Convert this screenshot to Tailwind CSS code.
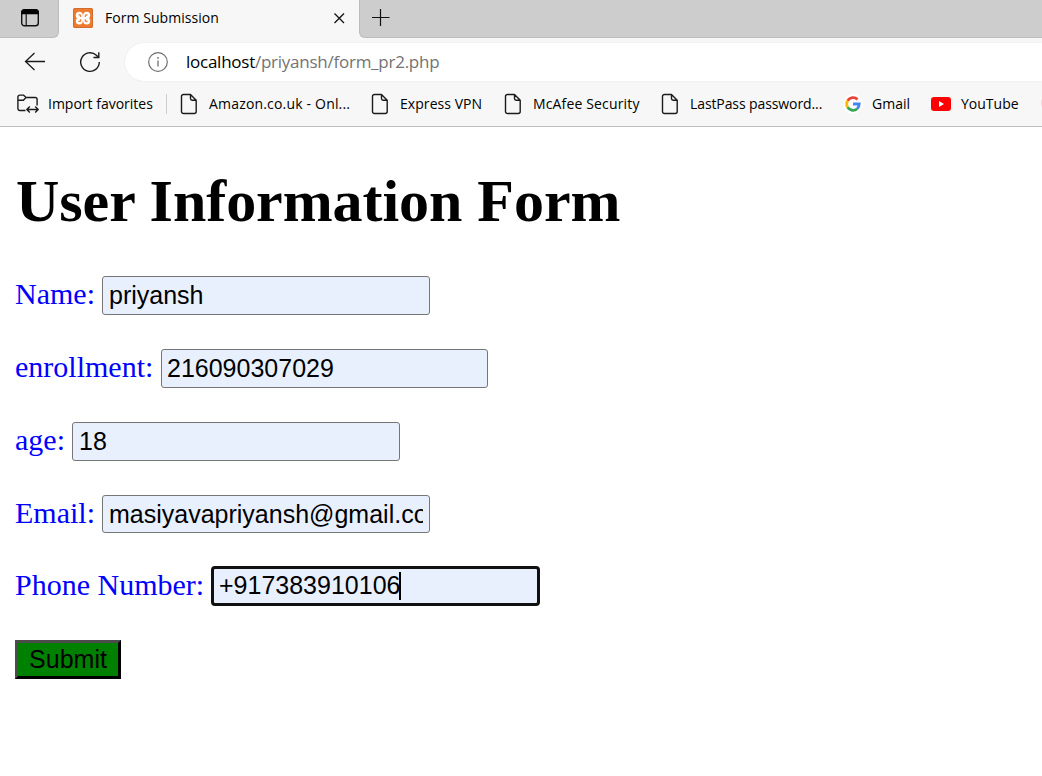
<!DOCTYPE html>
<html lang="en">
<head>
<meta charset="utf-8">
<title>Form Submission</title>
<script src="https://cdn.jsdelivr.net/npm/@tailwindcss/browser@4"></script>
</head>
<body class="w-[1042px] h-[776px] overflow-hidden bg-white text-black font-['Open_Sans','Noto_Sans',sans-serif]">
<svg class="hidden">
  <symbol id="page" viewBox="0 0 18 22"><path d="M3.500 1.500H10.500L16.200 7.200V18.500a2 2 0 0 1-2 2H3.500a2 2 0 0 1-2-2v-15a2 2 0 0 1 2-2ZM10.500 1.500V5.500a1.700 1.700 0 0 0 1.700 1.700h4" fill="none" stroke="#1b1b1b" stroke-width="1.400" stroke-linejoin="round"/></symbol>
</svg>
<header class="bg-[#f7f7f7] h-[127px] border-b border-[#bdbdbd]">
  <div class="flex h-[38px] bg-[#f7f7f7]">
    <div class="w-[59px] h-[38px] bg-[#cdcdcd] rounded-br-md border-b border-r border-[#bcbcbc] pl-5 pt-[8px]">
      <svg class="w-5 h-5" viewBox="0 0 20 20"><rect x="1.700" y="1.700" width="16.600" height="16.100" rx="2.800" fill="none" stroke="#111" stroke-width="1.400"/><path d="M1.200 6.200V4.400A3.200 3.200 0 0 1 4.400 1.200h11.200a3.200 3.200 0 0 1 3.200 3.200v1.800Z" fill="#000"/><path d="M6.200 6v12" stroke="#111" stroke-width="1.200"/></svg>
    </div>
    <div class="w-[300px] flex items-center pl-[14px] pb-[2px]">
      <svg class="w-5 h-5 shrink-0" viewBox="0 0 20 20"><rect width="20" height="20" rx="1.800" fill="#f07a2c"/><rect x=".5" y=".5" width="19" height="19" rx="1.500" fill="none" stroke="#cf6d35"/><g fill="#fff"><circle cx="6.300" cy="7.300" r="3.500"/><circle cx="13.700" cy="7.300" r="3.500"/><circle cx="6.300" cy="13" r="3.500"/><circle cx="13.700" cy="13" r="3.500"/><rect x="5.500" y="7.500" width="9" height="5.300"/></g><path d="M5.500 6.900h1.300q.9 0 .9.900v1.200M14.500 6.900h-1.300q-.9 0-.9.900v1.200M5.500 13.400h1.300q.9 0 .9-.9v-1.200M14.500 13.400h-1.300q-.9 0-.9-.9v-1.200" fill="none" stroke="#f07a2c" stroke-width="1.200"/></svg>
      <span class="ml-3 text-[14px] tracking-[0.050px] whitespace-nowrap w-[228px] relative -top-px">Form Submission</span>
      <svg class="w-3 h-3 shrink-0" viewBox="0 0 12 12"><path d="M1.500 1.500 11 11M11 1.500 1.500 11" stroke="#111" stroke-width="1.300"/></svg>
    </div>
    <div class="flex-1 bg-[#cdcdcd] rounded-bl-md border-b border-l border-[#bcbcbc] pl-[12px] pt-[8px]">
      <svg class="w-[18px] h-[18px]" viewBox="0 0 18 18"><path d="M0 9.500h17.500M8.500 1v17" stroke="#111" stroke-width="1.200"/></svg>
    </div>
  </div>
  <div class="flex items-center h-12">
    <svg class="ml-6 w-[22px] h-5 shrink-0" viewBox="0 0 22 20"><path d="M21 9.500H2M10.500 1 1.500 9.500l9 8.500" fill="none" stroke="#1b1b1b" stroke-width="1.300"/></svg>
    <svg class="ml-[33px] w-[22px] h-[22px] shrink-0" viewBox="0 0 22 22"><path d="M20.300 11a9.300 9.300 0 1 1-2.900-6.700l1.800 1.800M19.800 1.200v5.300h-5.300" fill="none" stroke="#1b1b1b" stroke-width="1.400"/></svg>
    <div class="ml-6 h-[38px] flex-1 flex items-center bg-white rounded-l-full shadow-[0_0_2px_#e2e2e2] pl-[23px]">
      <svg class="w-5 h-5 shrink-0" viewBox="0 0 20 20"><circle cx="10" cy="10" r="9.300" fill="none" stroke="#707070" stroke-width="1.200"/><path d="M10 8.500v6" stroke="#707070" stroke-width="1.300"/><circle cx="10" cy="5.900" r=".9" fill="#707070"/></svg>
      <span class="ml-[18px] text-[17px] tracking-[-0.250px] whitespace-nowrap">localhost<span class="text-[#737373]">/priyansh/form_pr2.php</span></span>
    </div>
  </div>
  <nav class="flex items-center h-[34px] text-[14px] whitespace-nowrap overflow-hidden">
    <div class="w-[167px] flex items-center shrink-0 pl-[17px] relative">
      <svg class="w-[22px] h-5 shrink-0 relative top-px" viewBox="0 0 22 20"><path d="M8.500 16.500H2.800A1.900 1.900 0 0 1 .9 14.600V3A1.900 1.900 0 0 1 2.800 1.100h3.600L9 3.500h9.200a1.900 1.900 0 0 1 1.900 1.900v6M.9 6.200h5.500L9 3.500M10.300 15.500h10.400M12.800 12.500l-3 3 3 3M18.200 12.500l3 3-3 3" fill="none" stroke="#1b1b1b" stroke-width="1.400" stroke-linejoin="round"/></svg>
      <span class="ml-[9px]">Import favorites</span>
      <i class="absolute right-0 top-px h-5 w-px bg-[#cfcfcf]"></i>
    </div>
    <div class="w-[191px] flex items-center shrink-0 pl-[13px]"><svg class="w-[18px] h-[22px] relative top-px"><use href="#page"/></svg><span class="ml-[11px] tracking-[0.180px]">Amazon.co.uk - Onl...</span></div>
    <div class="w-[133px] flex items-center shrink-0 pl-[13px]"><svg class="w-[18px] h-[22px] relative top-px"><use href="#page"/></svg><span class="ml-[11px] tracking-[0.060px]">Express VPN</span></div>
    <div class="w-[157px] flex items-center shrink-0 pl-[13px]"><svg class="w-[18px] h-[22px] relative top-px"><use href="#page"/></svg><span class="ml-[11px] tracking-[0.150px]">McAfee Security</span></div>
    <div class="w-[184px] flex items-center shrink-0 pl-[13px]"><svg class="w-[18px] h-[22px] relative top-px"><use href="#page"/></svg><span class="ml-[11px] tracking-[-0.100px]">LastPass password...</span></div>
    <div class="w-[99px] flex items-center shrink-0 pl-[11px]">
      <svg class="w-5 h-5 shrink-0 relative top-px" viewBox="0 0 20 20"><circle cx="10" cy="10" r="10" fill="#fff"/><g fill="none" stroke-width="2.800"><path d="M4.600 6.700A6.300 6.300 0 0 1 14.500 5.500" stroke="#ea4335"/><path d="M4.600 13.300a6.300 6.300 0 0 1 0-6.600" stroke="#fbbc05"/><path d="M14.200 14.700a6.300 6.300 0 0 1-9.600-1.400" stroke="#34a853"/><path d="M10 10h6.200a6.300 6.300 0 0 1-2 4.700" stroke="#4285f4"/></g></svg>
      <span class="ml-[9px]">Gmail</span></div>
    <div class="flex items-center shrink-0">
      <svg class="w-5 h-[14px] shrink-0 relative top-px" viewBox="0 0 20 14"><rect width="20" height="14" rx="3" fill="#f00"/><path d="M8 4v6l5-3Z" fill="#fff"/></svg>
      <span class="ml-[10px] w-[80px]">YouTube</span></div>
    <i class="w-5 h-5 rounded-full bg-[#f3d9de] shrink-0"></i>
  </nav>
</header>
<main class="pl-[15px] pt-[36px] font-['Liberation_Serif',serif] text-[30px] leading-[36px] text-[#00f]">
  <h1 class="pl-px text-[60px] leading-[76px] tracking-[-0.050px] font-bold text-black whitespace-nowrap">User Information Form</h1>
  <form class="mt-[37px] flex flex-col">
    <label class="flex h-[73px] items-start"><span class="w-[87px]">Name:</span><input class="w-[328px] h-[39px] rounded-[3px] border border-[#767676] bg-[#e8f0fe] px-[6px] font-['Liberation_Sans',sans-serif] text-[25px] text-black" value="priyansh"></label>
    <label class="flex h-[73px] items-start"><span class="w-[146px]">enrollment:</span><input class="w-[327px] h-[39px] rounded-[3px] border border-[#767676] bg-[#e8f0fe] px-[5px] font-['Liberation_Sans',sans-serif] text-[25px] text-black" value="216090307029"></label>
    <label class="flex h-[73px] items-start"><span class="w-[57px]">age:</span><input class="w-[328px] h-[39px] rounded-[3px] border border-[#767676] bg-[#e8f0fe] px-[6px] font-['Liberation_Sans',sans-serif] text-[25px] text-black" value="18"></label>
    <label class="flex h-[73px] items-start"><span class="w-[87px]">Email:</span><input class="w-[328px] h-[38px] rounded-[3px] border border-[#767676] bg-[#e8f0fe] px-[6px] font-['Liberation_Sans',sans-serif] text-[25px] text-black" value="masiyavapriyansh@gmail.com"></label>
    <label class="flex h-[72px] items-start"><span class="w-[196px] -mt-px whitespace-nowrap">Phone Number:</span><span class="-mt-[2px] flex items-center w-[329px] h-[40px] rounded-[4px] border-[3px] border-[#101010] bg-[#e8f0fe] pl-[5px] font-['Liberation_Sans',sans-serif] text-[25px] leading-[34px] text-black"><span class="relative -top-px">+917383910106</span><i class="w-[2px] h-[28px] bg-black -ml-px"></i></span></label>
    <button type="button" class="w-[106px] h-[39px] border-[3px] border-t-[#4c4c4c] border-l-[#4c4c4c] border-b-black border-r-black bg-[#008000] font-['Liberation_Sans',sans-serif] text-[25px] leading-[33px] text-black">Submit</button>
  </form>
</main>
</body>
</html>
